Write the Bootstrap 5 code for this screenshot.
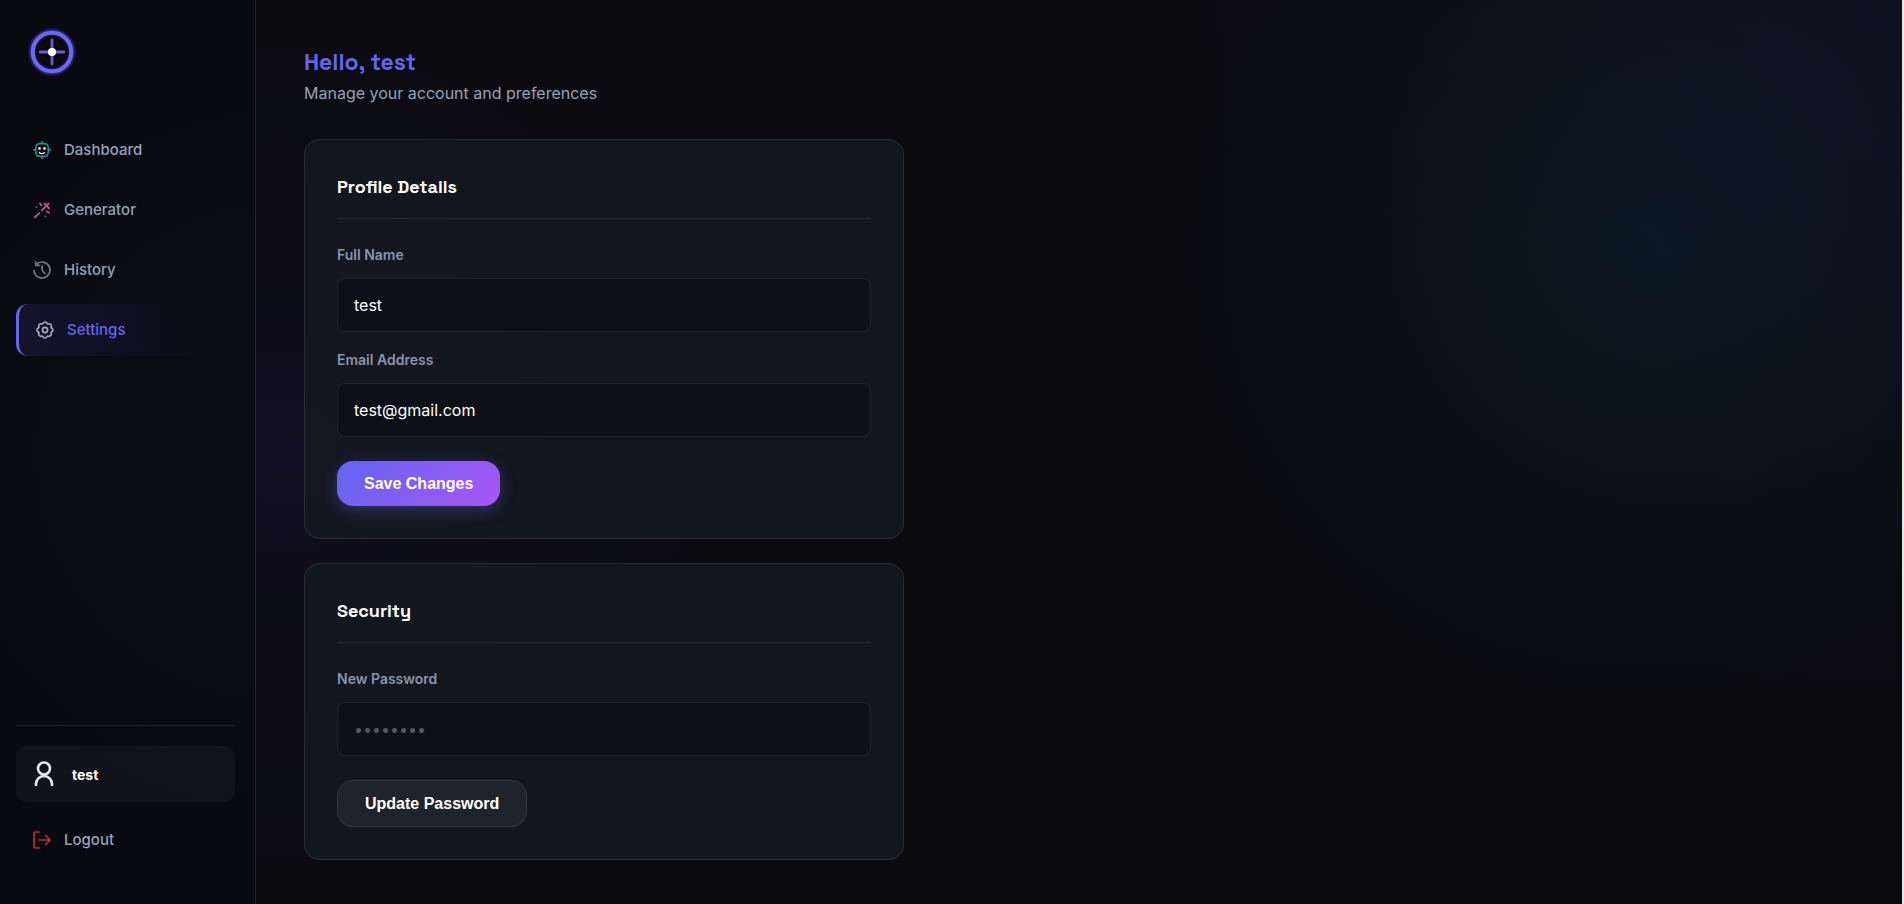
<!DOCTYPE html>
<html lang="en">
<head>
<meta charset="utf-8">
<meta name="viewport" content="width=device-width, initial-scale=1">
<title>Account settings</title>
<link href="https://cdn.jsdelivr.net/npm/bootstrap@5.3.0/dist/css/bootstrap.min.css" rel="stylesheet">
<style>
:root { --line: rgba(255,255,255,.1); --muted: #94a3b8; --indigo: #6366f1; }
body {
  font-family: Inter, "Liberation Sans", sans-serif;
  color: #fff;
  background:
    radial-gradient(circle at 15% 50%, rgba(99,70,241,.08), transparent 25%),
    radial-gradient(circle at 86% 28%, rgba(6,182,212,.07), transparent 26%),
    radial-gradient(circle at 100% 0, rgba(50,60,150,.1), transparent 34%),
    #0a0a0f;
}
.app-shell { min-height: 100vh; border-right: 2px solid #e8e8e8; }
.side-panel { flex: 0 0 256px; padding: 24px 20px 38px 16px; border-right: 1px solid var(--line); background: rgba(9,10,17,.65); }
.brand-mark { width: 56px; height: 56px; margin-left: 8px; }
.main-menu { margin-top: 44px; }
.menu-link { display: flex; align-items: center; gap: 12px; height: 52px; padding: 0 16px; border-radius: 12px; color: var(--muted); font-size: 15px; font-weight: 500; text-decoration: none; }
.menu-link svg { width: 20px; height: 20px; flex: none; }
.menu-link.current { color: var(--indigo); border-left: 3px solid var(--indigo); background: linear-gradient(90deg, rgba(99,102,241,.11), transparent); }
.user-chip { height: 56px; padding: 0 16px; gap: 16px; margin-bottom: 12px; border-radius: 12px; background: rgba(255,255,255,.04); font-size: 14px; font-weight: 700; }
.side-foot { border-top: 1px solid var(--line); padding-top: 20px; }
.content { padding: 45px 48px 40px; }
h1 { font: 600 23px/34px "Space Grotesk", Inter, sans-serif; color: var(--indigo); margin: 0; }
.intro { font-size: 16px; line-height: 28px; color: var(--muted); }
.panel { max-width: 600px; padding: 32px; border: 1px solid var(--line); border-radius: 16px; background: rgba(20,26,33,.84); }
h2 { font: 700 18px/30px "Space Grotesk", Inter, sans-serif; margin: 0 0 24px; padding-bottom: 16px; border-bottom: 1px solid var(--line); }
.field-label { display: block; font-size: 14px; font-weight: 600; line-height: 23px; color: #8896ab; margin-bottom: 12px; }
.form-control.field { height: 54px; padding: 0 16px; border: 1px solid rgba(255,255,255,.08); border-radius: 8px; background: rgba(10,12,18,.6); color: #fff; font-size: 16px; }
.form-control.field::placeholder { color: #545862; opacity: 1; }
.action { font: 700 16px/23px "Liberation Sans", sans-serif; color: #fff; border-radius: 16px; padding: 11px 27px; }
.action-main { border: 0; background: linear-gradient(135deg, #6366f1, #a855f7); box-shadow: 0 4px 15px rgba(99,102,241,.35); }
.action-alt { border: 1px solid var(--line); background: rgba(255,255,255,.055); }
</style>
<script src="https://cdn.jsdelivr.net/npm/bootstrap@5.3.0/dist/js/bootstrap.bundle.min.js" defer></script>
</head>
<body>
<div class="app-shell d-flex">
  <aside class="side-panel d-flex flex-column">
    <svg class="brand-mark" viewBox="0 0 56 56" fill="none" aria-label="Logo">
      <defs><filter id="halo" x="-30%" y="-30%" width="160%" height="160%"><feGaussianBlur stdDeviation="1.6"/></filter></defs>
      <circle cx="28" cy="28" r="20" stroke="#3f38c8" stroke-width="4.5" filter="url(#halo)"/>
      <circle cx="28" cy="28" r="19.2" stroke="#6c69ec" stroke-width="4"/>
      <path d="M28 16v24M16 28h24" stroke="#6b5bd0" stroke-width="2.8" stroke-linecap="round"/>
      <circle cx="28" cy="28" r="4" fill="#fff"/>
    </svg>
    <nav class="main-menu d-flex flex-column gap-2" aria-label="Main">
      <a class="menu-link" href="#dashboard">
        <svg viewBox="0 0 20 20" fill="none"><g stroke="#259aa2" stroke-width="1.5"><rect x="3.8" y="3.8" width="12.4" height="12.4" rx="3.4"/><path d="M10 1v3M10 16v3M1 10h3M16 10h3"/></g><g fill="#f6d2cb"><circle cx="7.5" cy="8.5" r="1.4"/><circle cx="12.5" cy="8.5" r="1.4"/></g><path d="M7 12.2q3 2.8 6 0" stroke="#f0f0f0" stroke-width="1.3"/></svg>
        Dashboard</a>
      <a class="menu-link" href="#generator">
        <svg viewBox="0 0 20 20" fill="none" stroke="#b95480" stroke-width="1.9" stroke-linecap="round"><path d="M2.8 17.5 7.3 13.1M9.8 10.4l6.8-6.9M12.6 3.6l4.4 4.6M8 3.5l1.3 1.8M15 11.5l1.9 1.3"/><path d="M4.5 7h.1M13.5 16.5h.1" stroke="#2c6f83"/></svg>
        Generator</a>
      <a class="menu-link" href="#history">
        <svg viewBox="0 0 20 20" fill="none" stroke="#77787f" stroke-width="1.7" stroke-linecap="round" stroke-linejoin="round"><path d="M2 10.5a8 8 0 1 0 2.2-6M3.8 1.8v3.6h3.7M10.2 6v4.5l2.5 3"/></svg>
        History</a>
      <a class="menu-link current" href="#settings" aria-current="page">
        <svg viewBox="0 0 20 20" fill="none" stroke="#a9abb8" stroke-width="1.6" stroke-linejoin="round"><circle cx="10" cy="10" r="2.6"/><path d="M16.1 7.5Q20 10 16.1 12.5Q17 17 12.5 16.1Q10 20 7.5 16.1Q3 17 3.9 12.5Q0 10 3.9 7.5Q3 3 7.5 3.9Q10 0 12.5 3.9Q17 3 16.1 7.5Z"/></svg>
        Settings</a>
    </nav>
    <div class="side-foot mt-auto">
      <div class="user-chip d-flex align-items-center">
        <svg width="24" height="28" viewBox="0 0 24 28" fill="none" stroke="#e6e6ea" stroke-width="2.6"><circle cx="12" cy="8.5" r="6"/><path d="M4 26v-2a8 8 0 0 1 16 0v2"/></svg>
        test
      </div>
      <a class="menu-link" href="#logout">
        <svg viewBox="0 0 20 20" fill="none" stroke="#b4343a" stroke-width="1.7" stroke-linecap="round" stroke-linejoin="round"><path d="M7.5 2H3.5Q2 2 2 3.5v13Q2 18 3.5 18h4M7 10h11M13.5 5.5 18 10l-4.5 4.5"/></svg>
        Logout</a>
    </div>
  </aside>
  <main class="content flex-grow-1">
    <h1>Hello, test</h1>
    <p class="intro mb-4 pb-2">Manage your account and preferences</p>
    <form class="panel mb-4">
      <h2>Profile Details</h2>
      <label class="field-label" for="name">Full Name</label>
      <input class="form-control field mb-3" id="name" type="text" value="test">
      <label class="field-label" for="email">Email Address</label>
      <input class="form-control field mb-4" id="email" type="email" value="test@gmail.com">
      <button class="action action-main" type="button">Save Changes</button>
    </form>
    <form class="panel">
      <h2>Security</h2>
      <label class="field-label" for="password">New Password</label>
      <input class="form-control field mb-4" id="password" type="password" placeholder="••••••••">
      <button class="action action-alt" type="button">Update Password</button>
    </form>
  </main>
</div>
</body>
</html>
